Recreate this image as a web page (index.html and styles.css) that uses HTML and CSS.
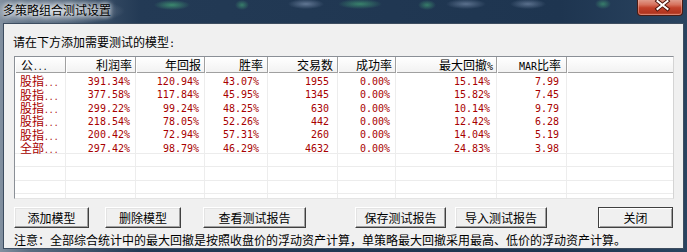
FILE: index.html
```html
<!DOCTYPE html>
<html lang="zh-CN">
<head>
    <meta charset="UTF-8">
    <title>多策略组合测试设置</title>
    <link rel="stylesheet" href="styles.css">
</head>
<body>
    <div class="window">
        <div class="titlebar">
            <span class="title">多策略组合测试设置</span>
            <div class="close-btn">
                <svg width="46" height="16" viewBox="0 0 46 16">
                    <path d="M19.5 2 L29.5 10 M29.5 2 L19.5 10" stroke="#4a1208" stroke-width="4" stroke-linecap="square"/>
                    <path d="M19.5 2 L29.5 10 M29.5 2 L19.5 10" stroke="#ffffff" stroke-width="2" stroke-linecap="square"/>
                </svg>
            </div>
        </div>

        <div class="client">
            <div class="prompt">请在下方添加需要测试的模型<span class="m">:</span></div>

            <div class="list">
                <div class="row head">
                    <div class="cell">公<span class="dots">...</span></div>
                    <div class="cell">利润率</div>
                    <div class="cell">年回报</div>
                    <div class="cell">胜率</div>
                    <div class="cell">交易数</div>
                    <div class="cell">成功率</div>
                    <div class="cell">最大回撤<span class="m">%</span></div>
                    <div class="cell"><span class="m">MAR</span>比率</div>
                    <div class="cell"></div>
                </div>
                <div class="row data">
                    <div class="cell name">股指<span class="dots">...</span></div>
                    <div class="cell">391.34%</div>
                    <div class="cell">120.94%</div>
                    <div class="cell">43.07%</div>
                    <div class="cell">1955</div>
                    <div class="cell">0.00%</div>
                    <div class="cell">15.14%</div>
                    <div class="cell">7.99</div>
                    <div class="cell"></div>
                </div>
                <div class="row data">
                    <div class="cell name">股指<span class="dots">...</span></div>
                    <div class="cell">377.58%</div>
                    <div class="cell">117.84%</div>
                    <div class="cell">45.95%</div>
                    <div class="cell">1345</div>
                    <div class="cell">0.00%</div>
                    <div class="cell">15.82%</div>
                    <div class="cell">7.45</div>
                    <div class="cell"></div>
                </div>
                <div class="row data">
                    <div class="cell name">股指<span class="dots">...</span></div>
                    <div class="cell">299.22%</div>
                    <div class="cell">99.24%</div>
                    <div class="cell">48.25%</div>
                    <div class="cell">630</div>
                    <div class="cell">0.00%</div>
                    <div class="cell">10.14%</div>
                    <div class="cell">9.79</div>
                    <div class="cell"></div>
                </div>
                <div class="row data">
                    <div class="cell name">股指<span class="dots">...</span></div>
                    <div class="cell">218.54%</div>
                    <div class="cell">78.05%</div>
                    <div class="cell">52.26%</div>
                    <div class="cell">442</div>
                    <div class="cell">0.00%</div>
                    <div class="cell">12.42%</div>
                    <div class="cell">6.28</div>
                    <div class="cell"></div>
                </div>
                <div class="row data">
                    <div class="cell name">股指<span class="dots">...</span></div>
                    <div class="cell">200.42%</div>
                    <div class="cell">72.94%</div>
                    <div class="cell">57.31%</div>
                    <div class="cell">260</div>
                    <div class="cell">0.00%</div>
                    <div class="cell">14.04%</div>
                    <div class="cell">5.19</div>
                    <div class="cell"></div>
                </div>
                <div class="row data">
                    <div class="cell name">全部<span class="dots">...</span></div>
                    <div class="cell">297.42%</div>
                    <div class="cell">98.79%</div>
                    <div class="cell">46.29%</div>
                    <div class="cell">4632</div>
                    <div class="cell">0.00%</div>
                    <div class="cell">24.83%</div>
                    <div class="cell">3.98</div>
                    <div class="cell"></div>
                </div>
                <div class="row empty">
                    <div class="cell"></div><div class="cell"></div><div class="cell"></div>
                    <div class="cell"></div><div class="cell"></div><div class="cell"></div>
                    <div class="cell"></div><div class="cell"></div><div class="cell"></div>
                </div>
                <div class="row empty">
                    <div class="cell"></div><div class="cell"></div><div class="cell"></div>
                    <div class="cell"></div><div class="cell"></div><div class="cell"></div>
                    <div class="cell"></div><div class="cell"></div><div class="cell"></div>
                </div>
                <div class="row empty">
                    <div class="cell"></div><div class="cell"></div><div class="cell"></div>
                    <div class="cell"></div><div class="cell"></div><div class="cell"></div>
                    <div class="cell"></div><div class="cell"></div><div class="cell"></div>
                </div>
                <div class="row empty">
                    <div class="cell"></div><div class="cell"></div><div class="cell"></div>
                    <div class="cell"></div><div class="cell"></div><div class="cell"></div>
                    <div class="cell"></div><div class="cell"></div><div class="cell"></div>
                </div>
            </div>

            <div class="buttons">
                <button class="btn">添加模型</button>
                <button class="btn">删除模型</button>
                <button class="btn">查看测试报告</button>
                <button class="btn">保存测试报告</button>
                <button class="btn">导入测试报告</button>
                <button class="btn default">关闭</button>
            </div>

            <div class="note">注意：全部综合统计中的最大回撤是按照收盘价的浮动资产计算，单策略最大回撤采用最高、低价的浮动资产计算。</div>
        </div>
    </div>
</body>
</html>
```

FILE: styles.css
```css
* {
    box-sizing: border-box;
}

body {
    margin: 0;
    width: 687px;
    height: 252px;
    overflow: hidden;
    font-family: "Noto Sans CJK SC", sans-serif;
    font-size: 12px;
    color: #000;
}

.window {
    width: 687px;
    height: 252px;
    display: flex;
    flex-direction: column;
    background: linear-gradient(to right, #8290a0 0, #5a6c80 30px, #233a55 140px, #1e3550 560px, #2a4460 100%);
}

.titlebar {
    height: 23px;
    flex: none;
    position: relative;
    padding: 3px 0 0 3px;
    background:
        radial-gradient(ellipse 70px 14px at 55px 11px, rgba(215, 222, 230, 0.75), rgba(215, 222, 230, 0) 100%),
        radial-gradient(ellipse 18px 5px at 172px 5px, rgba(70, 170, 120, 0.7), rgba(70, 170, 120, 0)),
        radial-gradient(ellipse 7px 5px at 242px 5px, rgba(70, 170, 120, 0.6), rgba(70, 170, 120, 0)),
        radial-gradient(ellipse 18px 5px at 306px 4px, rgba(150, 170, 200, 0.55), rgba(150, 170, 200, 0)),
        radial-gradient(ellipse 22px 5px at 360px 4px, rgba(70, 170, 120, 0.65), rgba(70, 170, 120, 0)),
        radial-gradient(ellipse 9px 5px at 427px 5px, rgba(70, 170, 120, 0.6), rgba(70, 170, 120, 0)),
        radial-gradient(ellipse 20px 5px at 466px 4px, rgba(150, 170, 200, 0.5), rgba(150, 170, 200, 0)),
        radial-gradient(ellipse 18px 5px at 528px 4px, rgba(150, 170, 200, 0.5), rgba(150, 170, 200, 0)),
        radial-gradient(ellipse 8px 5px at 603px 4px, rgba(70, 170, 120, 0.6), rgba(70, 170, 120, 0));
}

.title {
    display: block;
    line-height: 14px;
    color: #000;
    text-shadow: 0 0 4px #fff, 0 0 6px #fff;
}

.close-btn {
    position: absolute;
    top: -1px;
    left: 637px;
    width: 46px;
    height: 17px;
    border: 1px solid #4a1c14;
    border-top: none;
    border-radius: 0 0 4px 4px;
    background: linear-gradient(#e2a394 0, #d7735e 35%, #c2412a 55%, #b23520 85%, #c65a40 100%);
    box-shadow: inset 0 0 0 1px rgba(255, 200, 190, 0.4);
}

.close-btn svg {
    display: block;
}

.client {
    flex: 1;
    margin: 0 3px 3px 3px;
    border: 1px solid #3d4d60;
    background: #f0f0f0;
    padding: 0 10px;
}

.prompt {
    margin: 11px 0 0 -1px;
    line-height: 14px;
}

.m {
    font-family: "DejaVu Sans Mono", monospace;
    font-size: 10px;
}

.dots {
    font-family: "DejaVu Sans Mono", monospace;
    font-size: 8px;
}

/* list view */
.list {
    margin-top: 5px;
    width: 660px;
    height: 143px;
    overflow: hidden;
    background: #fff;
    border: 1px solid #8a8f96;
    border-right-color: #d4d4d4;
    border-bottom-color: #e4e4e4;
}

.row {
    display: grid;
    grid-template-columns: 51px 70px 69px 63px 70px 58px 101px 70px 1fr;
}

.head {
    height: 16px;
    background: linear-gradient(#ffffff, #f2f2f2);
    border-bottom: 1px solid #a0a0a0;
}

.head .cell {
    line-height: 15px;
    text-align: right;
    padding-right: 3px;
    border-right: 1px solid #a0a0a0;
    box-shadow: inset 1px 0 #fff;
    white-space: nowrap;
}

.head .cell:first-child {
    text-align: left;
    padding: 0 0 0 6px;
}

.head .cell:nth-child(4),
.head .cell:nth-child(5) {
    padding-right: 4px;
}

.head .cell:nth-child(8) {
    padding-right: 5px;
}

.head .cell:last-child {
    border-right: none;
}

.data,
.empty {
    height: 13.33px;
}

.empty {
    border-top: 1px solid #ececec;
}

.data .cell,
.empty .cell {
    border-right: 1px solid #ededed;
}

.data .cell:last-child,
.empty .cell:last-child {
    border-right: none;
}

.data .cell {
    color: #a80000;
    font-family: "DejaVu Sans Mono", monospace;
    font-size: 10px;
    line-height: 9.33px;
    padding: 4px 5px 0 0;
    text-align: right;
    white-space: nowrap;
}

.data .cell.name {
    font-family: "Noto Sans CJK SC", sans-serif;
    font-size: 12px;
    line-height: 10px;
    text-align: left;
    padding: 3.3px 0 0 5px;
}

.data .cell:nth-child(4),
.data .cell:nth-child(5) {
    padding-right: 8px;
}

.data .cell:nth-child(7) {
    padding-right: 6px;
}

.data .cell:nth-child(8) {
    padding-right: 7px;
}

/* buttons */
.buttons {
    display: flex;
    margin-top: 8px;
}

.btn {
    height: 21px;
    padding: 0;
    font-family: "Noto Sans CJK SC", sans-serif;
    font-size: 12px;
    line-height: 19px;
    color: #000;
    background: #f0f0f0;
    border: 1px solid;
    border-color: #ffffff #404040 #404040 #ffffff;
    box-shadow: inset -1px -1px #a0a0a0, inset 1px 1px #e3e3e3;
}

.btn:nth-child(1) { width: 75px; }
.btn:nth-child(2) { width: 76px; margin-left: 16px; }
.btn:nth-child(3) { width: 103px; margin-left: 22px; }
.btn:nth-child(4) { width: 91px; margin-left: 49px; }
.btn:nth-child(5) { width: 92px; margin-left: 9px; }
.btn:nth-child(6) { width: 75px; margin-left: 51px; }

.btn.default {
    border-color: #404040;
    box-shadow: inset 1px 1px #fff, inset -1px -1px #a0a0a0;
}

.note {
    margin-top: 5px;
    line-height: 14px;
    white-space: nowrap;
}
```
